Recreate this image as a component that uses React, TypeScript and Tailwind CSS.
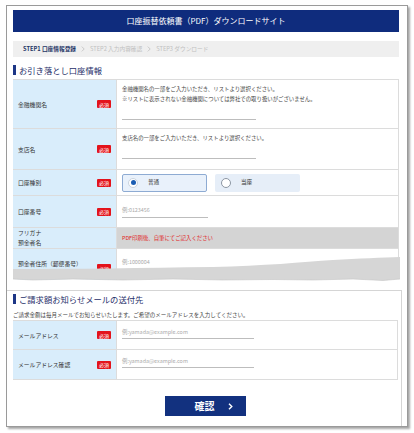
import React from "react";

const Badge = () => (
  <span className="inline-flex items-center justify-center w-[14px] h-[8px] bg-[#e3131b] text-white text-[5px] leading-none rounded-[1px] shrink-0">
    必須
  </span>
);

function Label({ children, required = true }: { children: React.ReactNode; required?: boolean }) {
  return (
    <div className="w-[104px] shrink-0 bg-[#d9edfb] border-r border-[#dcdcdc] flex items-center justify-between pl-[5px] pr-[5px] text-[5.8px] leading-[11px] text-[#333]">
      <div>{children}</div>
      {required && <Badge />}
    </div>
  );
}

const Chevron = () => (
  <svg width="4" height="6" viewBox="0 0 4 6" className="mx-[5px]">
    <path d="M0.8 0.6 L3.2 3 L0.8 5.4" fill="none" stroke="#c4c4c4" strokeWidth="0.9" />
  </svg>
);

const SectionTitle = ({ children }: { children: React.ReactNode }) => (
  <div className="h-[16px] flex items-center gap-[3px]">
    <div className="w-[3px] h-[10px] bg-[#1d3686]" />
    <div className="text-[8.3px] leading-none text-[#1f2f6a]">{children}</div>
  </div>
);

export default function App() {
  return (
    <div className="w-[414px] h-[433px] bg-white font-['Noto_Sans_CJK_JP',sans-serif] overflow-hidden">
      <div className="ml-[6px] mt-[5px] w-[402px] h-[422px] border border-[#9a9a9a] shadow-[2px_2px_2px_rgba(0,0,0,0.35)] pl-[6px] pr-[8px] pt-[4px] flex flex-col bg-white">
        {/* header */}
        <div className="h-[22px] bg-[#0f2c7d] flex items-center justify-center text-white text-[8px] leading-none">
          口座振替依頼書（PDF）ダウンロードサイト
        </div>
        {/* breadcrumb */}
        <div className="mt-[9px] h-[16px] bg-[#efefef] flex items-center pl-[10px] text-[5.7px] leading-none">
          <span className="font-bold text-[#253566]">STEP1 口座情報登録</span>
          <Chevron />
          <span className="text-[#c0c0c0]">STEP2 入力内容確認</span>
          <Chevron />
          <span className="text-[#c0c0c0]">STEP3 ダウンロード</span>
        </div>
        <div className="mt-[5px] mb-[1px]">
          <SectionTitle>お引き落とし口座情報</SectionTitle>
        </div>
        {/* table */}
        <div className="border-t border-r border-[#dcdcdc]">
          <div className="flex h-[49px] border-b border-[#dcdcdc]">
            <Label>金融機関名</Label>
            <div className="flex-1 pl-[5px] pt-[4px] text-[5.4px] leading-[10px] text-[#444]">
              <div>金融機関名の一部をご入力いただき、リストより選択ください。</div>
              <div>※リストに表示されない金融機関については弊社での取り扱いがございません。</div>
              <div className="w-[134px] h-[16px] border-b border-[#bdbdbd]" />
            </div>
          </div>
          <div className="flex h-[41px] border-b border-[#dcdcdc]">
            <Label>支店名</Label>
            <div className="flex-1 pl-[5px] pt-[4px] text-[5.4px] leading-[10px] text-[#444]">
              <div>支店名の一部をご入力いただき、リストより選択ください。</div>
              <div className="w-[134px] h-[16px] border-b border-[#bdbdbd]" />
            </div>
          </div>
          <div className="flex h-[26px] border-b border-[#dcdcdc]">
            <Label>口座種別</Label>
            <div className="flex-1 pl-[5px] flex items-center gap-[8px] text-[5.6px] text-[#333]">
              <div className="w-[85px] h-[18px] border border-[#8eabd3] bg-[#e9f1fb] rounded-[2px] flex items-center pl-[5px]">
                <div className="w-[10px] h-[10px] rounded-full bg-white border border-[#c9d3df] flex items-center justify-center">
                  <div className="w-[5px] h-[5px] rounded-full bg-[#1b5db3]" />
                </div>
                <span className="ml-[10px]">普通</span>
              </div>
              <div className="w-[85px] h-[18px] bg-[#e6eef8] rounded-[2px] flex items-center pl-[6px]">
                <div className="w-[10px] h-[10px] rounded-full bg-white border border-[#8c96a3]" />
                <span className="ml-[10px]">当座</span>
              </div>
            </div>
          </div>
          <div className="flex h-[32px] border-b border-[#dcdcdc]">
            <Label>口座番号</Label>
            <div className="flex-1 pl-[5px] pt-[8px]">
              <div className="w-[86px] h-[14px] border-b border-[#bdbdbd] flex items-center text-[5.4px] text-[#aaa]">例:0123456</div>
            </div>
          </div>
          <div className="flex h-[21px] border-b border-[#dcdcdc]">
            <Label required={false}>
              <div className="leading-[10px]">フリガナ</div>
              <div className="leading-[10px]">預金者名</div>
            </Label>
            <div className="flex-1 bg-[#d4d4d4] pl-[5px] flex items-center text-[5.4px] text-[#e02424]">
              PDF印刷後、自筆にてご記入ください
            </div>
          </div>
          <div className="relative h-[38px]">
            <div className="flex h-[38px]">
              <Label>
                <div className="-mt-[9px]">預金者住所（郵便番号）</div>
              </Label>
              <div className="flex-1 pl-[5px] pt-[7px]">
                <div className="w-[86px] h-[14px] border-b border-[#bdbdbd] flex items-center text-[5.4px] text-[#aaa]">例:1000004</div>
              </div>
            </div>
            <svg className="absolute left-0 top-[6px] w-[387px] h-[32px]" viewBox="0 0 387 32" preserveAspectRatio="none">
              <path
                d="M0,24 L20,25 L60,24 L110,25 L160,24 L210,25 L260,24.5 L300,25 L340,24 L370,25.5 L387,24 L387,32 L0,32 Z"
                fill="#ffffff"
              />
              <path
                d="M0,14 C60,14 130,13 200,12 C250,11 290,7 320,5 C345,3.5 370,2.5 387,2 L387,24 L370,25.5 L340,24 L300,25 L260,24.5 L210,25 L160,24 L110,25 L60,24 L20,25 L0,24 Z"
                fill="#d6d6d6"
              />
              <path d="M0,24 L20,25 L60,24 L110,25 L160,24 L210,25 L260,24.5 L300,25 L340,24 L370,25.5 L387,24" fill="none" stroke="#c4c4c4" strokeWidth="0.6" />
            </svg>
          </div>
        </div>
        {/* lower panel */}
        <div className="-ml-[6px] mr-[-3px] mt-[3px] flex-1 border-t border-r border-[#d5d5d5] pl-[6px] pr-[3px] flex flex-col">
          <SectionTitle>ご請求額お知らせメールの送付先</SectionTitle>
          <div className="mt-[3px] h-[10px] leading-[10px] text-[5.5px] text-[#444]">
            ご請求金額は毎月メールでお知らせいたします。ご希望のメールアドレスを入力してください。
          </div>
          <div className="border-t border-r border-[#dcdcdc]">
            <div className="flex h-[29px] border-b border-[#dcdcdc]">
              <Label>メールアドレス</Label>
              <div className="flex-1 pl-[5px] pt-[6px]">
                <div className="w-[132px] h-[12px] border-b border-[#bdbdbd] flex items-center text-[5.4px] text-[#aaa]">例:yamada@example.com</div>
              </div>
            </div>
            <div className="flex h-[30px] border-b border-[#dcdcdc]">
              <Label>メールアドレス確認</Label>
              <div className="flex-1 pl-[5px] pt-[6px]">
                <div className="w-[132px] h-[12px] border-b border-[#bdbdbd] flex items-center text-[5.4px] text-[#aaa]">例:yamada@example.com</div>
              </div>
            </div>
          </div>
          <div className="mt-[16px] flex justify-center">
            <div className="w-[81px] h-[20px] bg-[#12317f] flex items-center justify-center pl-[16px] gap-[13px] text-white">
              <span className="text-[10px] font-bold leading-none">確認</span>
              <svg width="5" height="7" viewBox="0 0 5 7">
                <path d="M1 0.8 L3.8 3.5 L1 6.2" fill="none" stroke="#fff" strokeWidth="1.4" />
              </svg>
            </div>
          </div>
        </div>
      </div>
    </div>
  );
}
